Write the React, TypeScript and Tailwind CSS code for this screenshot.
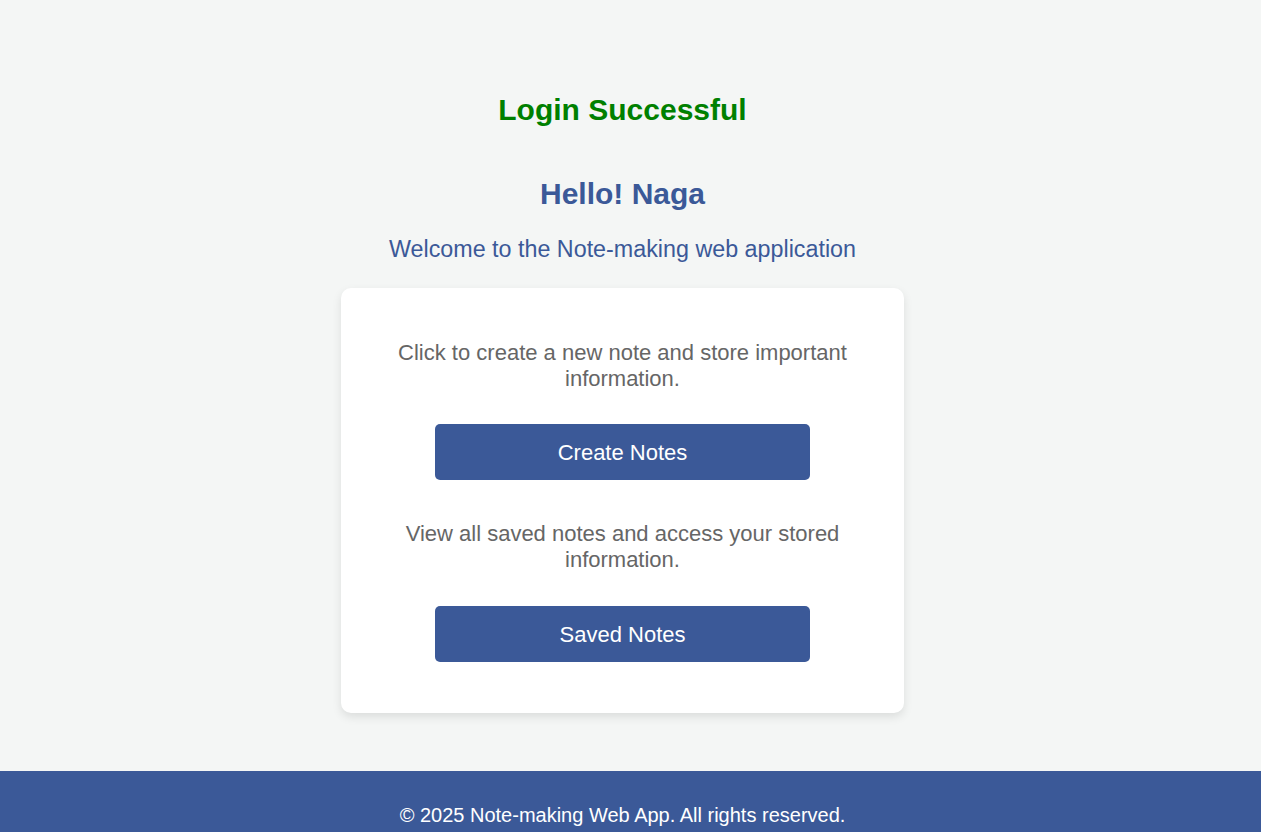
import React from 'react';

export default function App() {
  return (
    <div className="min-h-screen bg-[#f4f6f5] flex flex-col font-['Liberation_Sans',Arial,sans-serif]">
      {/* content is centred as if a 16px scrollbar took the right edge */}
      <main className="flex flex-col items-center pt-[92px] pr-[16px]">
        <h2 className="text-[30px] leading-[36px] font-bold text-[#008000]">Login Successful</h2>
        <h2 className="mt-[48px] text-[30px] leading-[36px] font-bold text-[#3b5998]">Hello! Naga</h2>
        <p className="mt-[23px] text-[23.3px] leading-[28px] text-[#3b5998]">
          Welcome to the Note-making web application
        </p>

        {/* Action card */}
        <div className="mt-[25px] w-[563px] bg-white rounded-[10px] shadow-[0_4px_10px_rgba(0,0,0,0.1)] px-10 pt-[52px] pb-[51px] flex flex-col items-center text-center">
          <p className="text-[22px] leading-[26px] text-[#666666]">
            Click to create a new note and store important information.
          </p>
          <button className="mt-[32px] w-[375px] h-[56px] rounded-[5px] bg-[#3b5998] text-white text-[22px]">
            Create Notes
          </button>
          <p className="mt-[41px] text-[22px] leading-[26px] text-[#666666]">
            View all saved notes and access your stored information.
          </p>
          <button className="mt-[33px] w-[375px] h-[56px] rounded-[5px] bg-[#3b5998] text-white text-[22px]">
            Saved Notes
          </button>
        </div>
      </main>

      <footer className="mt-[58px] bg-[#3b5998] pt-[32px] pb-[32px] pr-[16px] text-center text-white text-[20px] leading-[24px]">
        © 2025 Note-making Web App. All rights reserved.
      </footer>
    </div>
  );
}
